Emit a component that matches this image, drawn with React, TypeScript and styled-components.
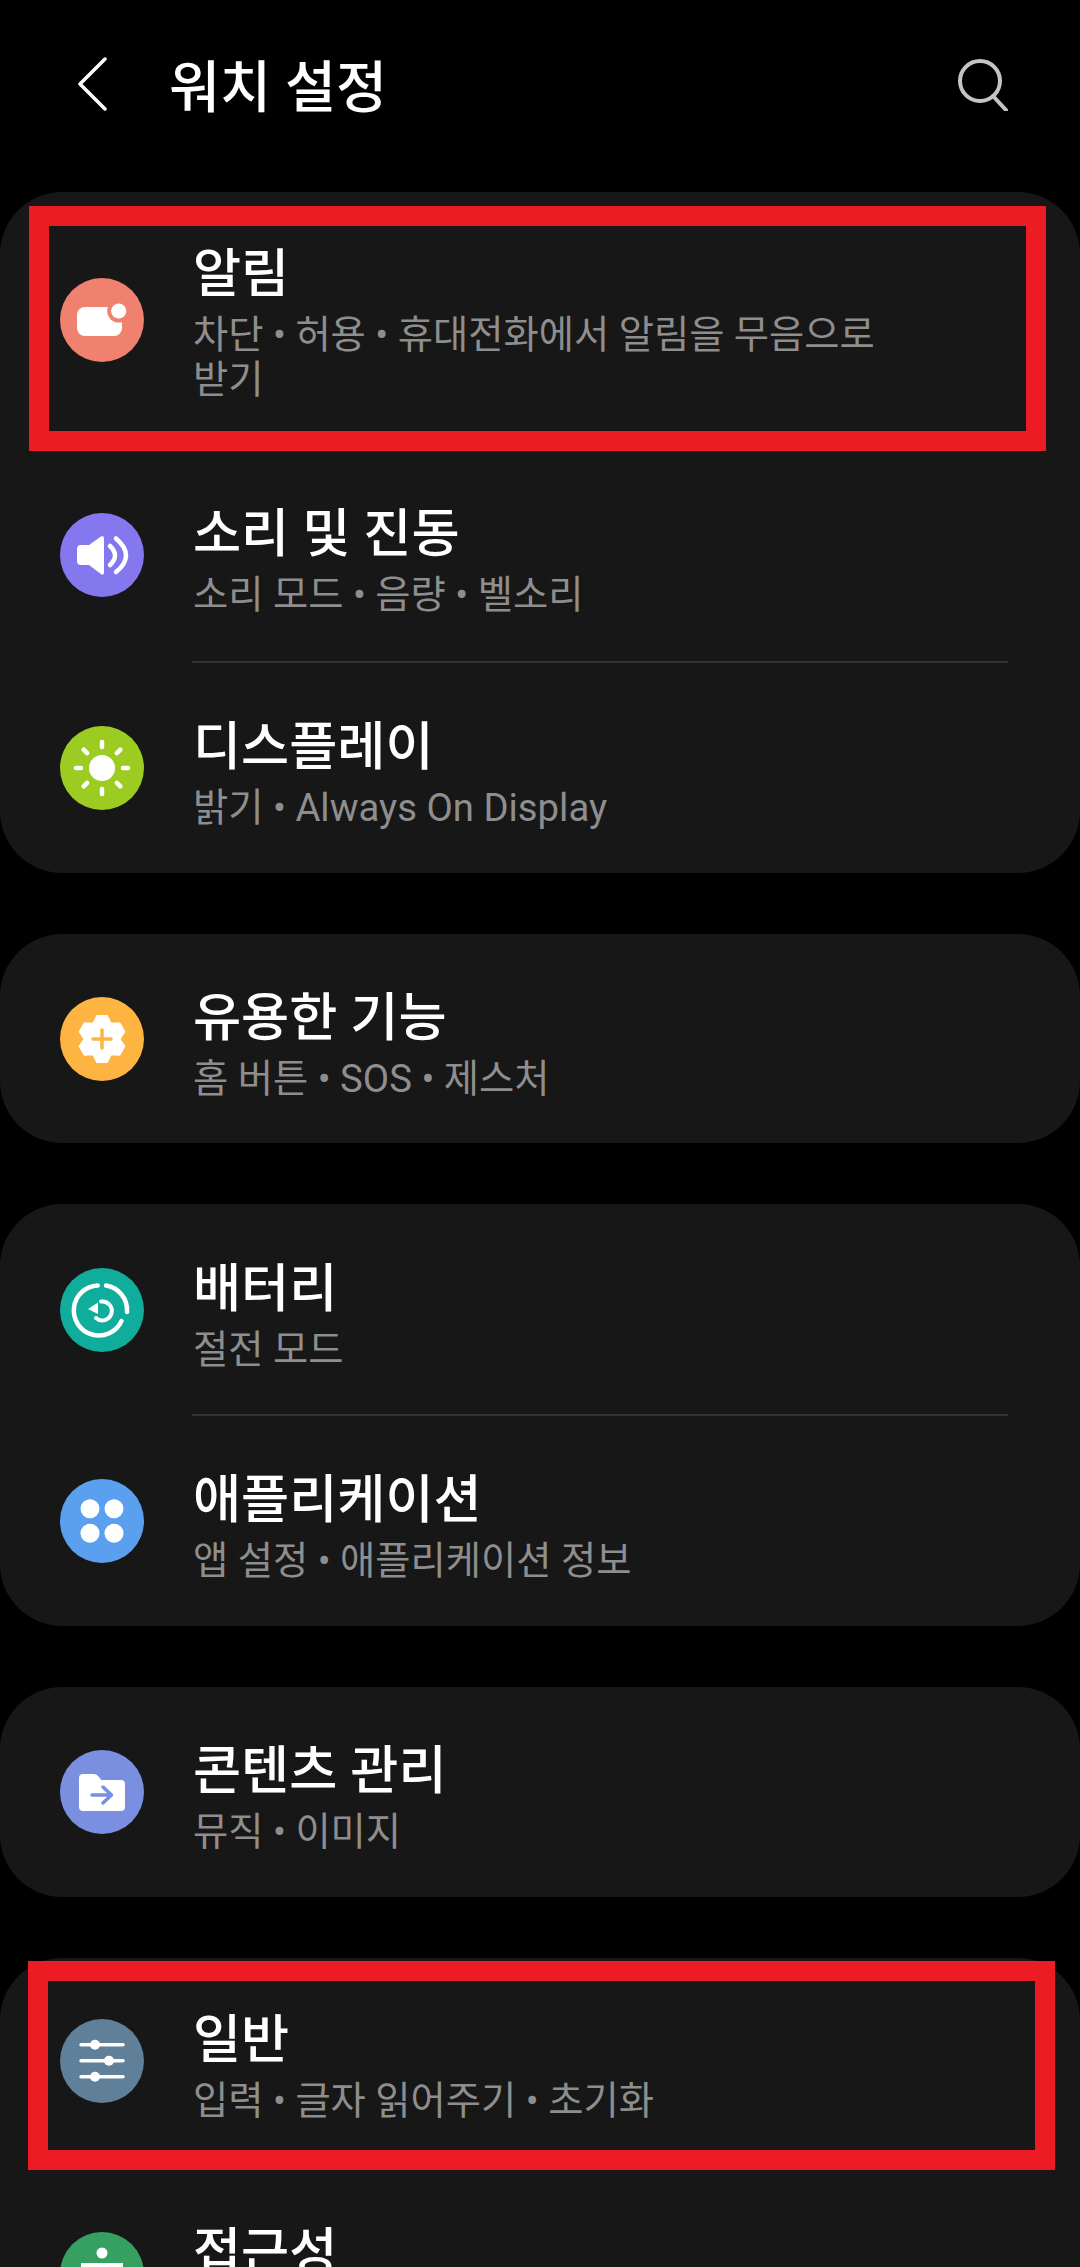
import React from 'react';
import styled, { createGlobalStyle } from 'styled-components';

const GlobalStyle = createGlobalStyle`
  html, body{
    margin: 0;
    padding: 0;
    background: #000;
  }
  body{
    font-family: Roboto, "Noto Sans CJK KR", sans-serif;
  }
`;

const Page = styled.div`
  width: 1080px;
  height: 2267px;
  overflow: hidden;
  background: #000;
`;

const Header = styled.header`
  height: 192px;
  display: flex;
  align-items: flex-start;
  padding: 57px 70px 0 77px;
  box-sizing: border-box;

  .back{
    width: 30px;
    height: 54px;
    margin-right: 62px;
  }
  .search{
    width: 54px;
    height: 54px;
    margin-left: auto;
  }
`;

const PageTitle = styled.h1`
  margin: 4px 0 0;
  font-size: 55.500px;
  font-weight: 500;
  line-height: 56px;
  color: #fff;
`;

const Card = styled.section`
  background: #171717;
  border-radius: 62px;
  margin-bottom: 61px;
`;

const Row = styled.div<{ $h: number }>`
  position: relative;
  height: ${(p) => p.$h}px;
  display: flex;
  align-items: center;
  padding-left: 60px;
  box-sizing: border-box;
`;

const IconCircle = styled.div<{ $color: string }>`
  width: 84px;
  height: 84px;
  flex: none;
  border-radius: 50%;
  background: ${(p) => p.$color};
  margin-right: 49px;

  svg{
    display: block;
    width: 84px;
    height: 84px;
  }
`;

const TextBlock = styled.div<{ $nudge: number }>`
  width: 700px;
  margin-top: ${(p) => p.$nudge}px;
`;

const Title = styled.div`
  font-size: 52.300px;
  font-weight: 500;
  line-height: 62px;
  color: #fff;
  margin-bottom: 7px;
`;

const Sub = styled.div`
  font-size: 38.300px;
  line-height: 45px;
  min-height: 45px;
  color: #8e8e8e;
`;

const Divider = styled.div`
  height: 2px;
  margin: -1px 72px -1px 192px;
  background: #333;
  position: relative;
`;

const Highlight = styled.div<{ $top: number; $bottom: number; $left: number; $right: number }>`
  position: absolute;
  top: ${(p) => p.$top}px;
  bottom: ${(p) => p.$bottom}px;
  left: ${(p) => p.$left}px;
  right: ${(p) => p.$right}px;
  border: 20px solid #ed1c24;
  pointer-events: none;
`;

const NotifyIcon = () => (
  <svg viewBox="0 0 84 84">
    <rect x="17" y="29" width="45" height="29" rx="8" fill="#fff" />
    <circle cx="58.7" cy="33" r="11.5" fill="#f0816f" />
    <circle cx="58.7" cy="33" r="7.6" fill="#fff" />
  </svg>
);

const SoundIcon = () => (
  <svg viewBox="0 0 84 84">
    <path d="M41 23.500Q44 22 44 26V59Q44 63 41 61L29 52H21Q17 52 17 48V36Q17 32 21 32H29Z" fill="#fff" />
    <path d="M50 33Q60 42.500 50 52" fill="none" stroke="#fff" strokeWidth="4.500" strokeLinecap="round" />
    <path d="M56 25.500Q76 42.500 56 59" fill="none" stroke="#fff" strokeWidth="4.500" strokeLinecap="round" />
  </svg>
);

const DisplayIcon = () => (
  <svg viewBox="0 0 84 84">
    <circle cx="42" cy="42" r="13" fill="#fff" />
    {[0, 45, 90, 135, 180, 225, 270, 315].map((a) => (
      <line key={a} x1="42" y1="16" x2="42" y2="21" stroke="#fff" strokeWidth="4.500" strokeLinecap="round" transform={`rotate(${a} 42 42)`} />
    ))}
  </svg>
);

// 톱니 6개
const gearPoints = [30, 90, 150, 210, 270, 330]
  .flatMap((a) => [
    [a - 12, 23.5],
    [a + 12, 23.5],
    [a + 30, 17.5],
  ])
  .map(([a, r]) => {
    const rad = (a * Math.PI) / 180;
    return `${(42 + r * Math.cos(rad)).toFixed(1)},${(42 + r * Math.sin(rad)).toFixed(1)}`;
  })
  .join(' ');

const UtilIcon = () => (
  <svg viewBox="0 0 84 84">
    <polygon points={gearPoints} fill="#fff" stroke="#fff" strokeWidth="2" strokeLinejoin="round" />
    <path d="M33 42H51M42 33V51" stroke="#fdb440" strokeWidth="3.500" strokeLinecap="round" />
  </svg>
);

const BatteryIcon = () => (
  <svg viewBox="0 0 84 84" fill="none" stroke="#fff" strokeLinecap="round">
    <path d="M46 17.500A25 25 0 0 1 67 44" strokeWidth="4.500" />
    <path d="M61.500 53A25 25 0 1 1 37.700 17.500" strokeWidth="4.500" />
    <path d="M41 33.500A9.500 9.500 0 1 1 36 50" strokeWidth="4" />
    <path d="M28 41L38 34.500V46Z" fill="#fff" stroke="none" />
  </svg>
);

const AppsIcon = () => (
  <svg viewBox="0 0 84 84" fill="#fff">
    <circle cx="30" cy="29.700" r="9.500" />
    <circle cx="54" cy="29.700" r="9.500" />
    <circle cx="30" cy="54.300" r="9.500" />
    <circle cx="54" cy="54.300" r="9.500" />
  </svg>
);

const FolderIcon = () => (
  <svg viewBox="0 0 84 84">
    <path d="M23 24H34Q37 24 39 27L41 30H61Q65 30 65 34V57Q65 61 61 61H23Q19 61 19 57V28Q19 24 23 24Z" fill="#fff" />
    <path d="M32 45H51M43 37L51.500 45L43 53" fill="none" stroke="#7a8fdf" strokeWidth="3.500" strokeLinecap="round" strokeLinejoin="round" />
  </svg>
);

const GeneralIcon = () => (
  <svg viewBox="0 0 84 84" fill="#fff">
    <path d="M21 25.700H63M21 41.700H63M21 57.700H63" stroke="#fff" strokeWidth="3.500" strokeLinecap="round" />
    <circle cx="35" cy="25.700" r="5" />
    <circle cx="49" cy="41.700" r="5" />
    <circle cx="35" cy="57.700" r="5" />
  </svg>
);

const AccessIcon = () => (
  <svg viewBox="0 0 84 84" fill="#fff">
    <circle cx="42" cy="21" r="5.500" />
    <path d="M21 31H63V36H49V62H35V36H21Z" />
  </svg>
);

type Item = {
  title: string;
  sub?: string;
  color: string;
  icon: React.ReactNode;
  h: number;
  nudge?: number;
  mark?: { top: number; bottom: number; left: number; right: number };
};

// 카드 단위로 묶음
const groups: Item[][] = [
  [
    { title: '알림', sub: '차단 • 허용 • 휴대전화에서 알림을 무음으로 받기', color: '#f0816f', icon: <NotifyIcon />, h: 256, nudge: 5, mark: { top: 14, bottom: -3, left: 29, right: 34 } },
    { title: '소리 및 진동', sub: '소리 모드 • 음량 • 벨소리', color: '#8578ee', icon: <SoundIcon />, h: 214 },
    { title: '디스플레이', sub: '밝기 • Always On Display', color: '#9ccb22', icon: <DisplayIcon />, h: 211 },
  ],
  [
    { title: '유용한 기능', sub: '홈 버튼 • SOS • 제스처', color: '#fdb440', icon: <UtilIcon />, h: 209 },
  ],
  [
    { title: '배터리', sub: '절전 모드', color: '#10ad9c', icon: <BatteryIcon />, h: 211 },
    { title: '애플리케이션', sub: '앱 설정 • 애플리케이션 정보', color: '#5ba0ef', icon: <AppsIcon />, h: 211 },
  ],
  [
    { title: '콘텐츠 관리', sub: '뮤직 • 이미지', color: '#7a8fdf', icon: <FolderIcon />, h: 210 },
  ],
  [
    { title: '일반', sub: '입력 • 글자 읽어주기 • 초기화', color: '#5f8098', icon: <GeneralIcon />, h: 206, mark: { top: 3, bottom: -6, left: 28, right: 25 } },
    { title: '접근성', color: '#36a060', icon: <AccessIcon />, h: 220 },
  ],
];

export default function App() {
  return (
    <Page>
      <GlobalStyle />
      <Header>
        <svg className="back" viewBox="0 0 30 54" fill="none" stroke="#fff" strokeWidth="3.500" strokeLinecap="round" strokeLinejoin="round">
          <path d="M28 2L3 27L28 52" />
        </svg>
        <PageTitle>워치 설정</PageTitle>
        <svg className="search" viewBox="0 0 54 54" fill="none" stroke="#c4c4c4" strokeWidth="4" strokeLinecap="round">
          <circle cx="24" cy="24" r="20" />
          <path d="M37 39L50 53" />
        </svg>
      </Header>
      {groups.map((group, gIdx) => (
        <Card key={gIdx}>
          {group.map((item, idx) => (
            <React.Fragment key={item.title}>
              {idx > 0 && !group[idx - 1].mark && <Divider />}
              <Row $h={item.h}>
                <IconCircle $color={item.color}>{item.icon}</IconCircle>
                <TextBlock $nudge={item.nudge ?? 10}>
                  <Title>{item.title}</Title>
                  <Sub>{item.sub}</Sub>
                </TextBlock>
                {item.mark && (
                  <Highlight $top={item.mark.top} $bottom={item.mark.bottom} $left={item.mark.left} $right={item.mark.right} />
                )}
              </Row>
            </React.Fragment>
          ))}
        </Card>
      ))}
    </Page>
  );
}
